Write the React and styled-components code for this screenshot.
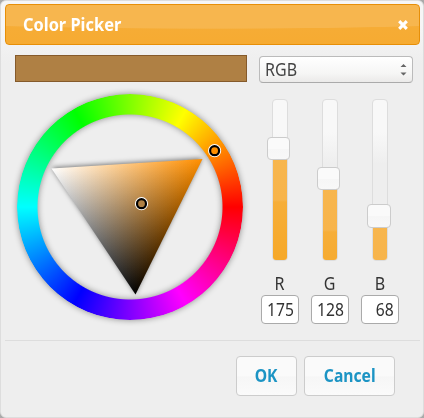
import React from "react";
import styled, { createGlobalStyle } from "styled-components";

const Page = createGlobalStyle`
  * { box-sizing: border-box; }
  body { margin: 0; background: #aaa; font-family: "Noto Sans", sans-serif; color: #333; }
`;

const Dialog = styled.main`
  width: 424px;
  height: 418px;
  padding: 3px 3px 0 4px;
  border: 1px solid #ddd;
  border-radius: 6px;
  background: linear-gradient(#f6f6f6 0, #f6f6f6 24px, #eee 62px);
`;

const TitleBar = styled.header`
  height: 41px;
  display: flex;
  align-items: center;
  justify-content: space-between;
  padding: 0 11px 0 17px;
  border: 1px solid #e78f08;
  border-radius: 4px;
  background: radial-gradient(ellipse 560px 36px at 50% -12px, #f7b64e 98%, transparent 100%),
    linear-gradient(#f7b64e, #f6ac35 60%, #f6ab32);
  color: #fff;
`;

const Title = styled.h1`
  margin: 0 0 2px;
  font: 700 18px/24px "Noto Sans", sans-serif;
  transform: scaleX(0.91);
  transform-origin: left;
`;

const Body = styled.section`
  height: 296px;
  display: grid;
  grid-template-columns: 232px 154px;
  column-gap: 12px;
  padding: 10px 0 0 10px;
  border-bottom: 1px solid #ddd;
`;

const Swatch = styled.div`
  height: 27px;
  border: 1px solid #855a2b;
  background: #af8044;
`;

const WheelArea = styled.div`
  position: relative;
  width: 226px;
  height: 226px;
  margin: 12px 0 0 2px;
`;

const RingShadow = styled.div`
  filter: drop-shadow(0 0 3px rgba(0, 0, 0, 0.42));
`;

const Ring = styled.div`
  width: 226px;
  height: 226px;
  border-radius: 50%;
  background: conic-gradient(from 90deg, #f00, #f0f, #00f, #0ff, #0f0, #ff0, #f00);
  mask: radial-gradient(circle, transparent 92px, #000 93px);
`;

const Shade = styled.svg`
  position: absolute;
  inset: 0;
  overflow: visible;

  .tri { filter: drop-shadow(0 -1px 2.5px rgba(0, 0, 0, 0.5)); }
  .mix { isolation: isolate; }
  .add { mix-blend-mode: plus-lighter; }
`;

const Controls = styled.div`
  padding-top: 1px;
`;

const Select = styled.div`
  height: 27px;
  display: flex;
  align-items: center;
  justify-content: space-between;
  padding: 0 5px 0 5px;
  border: 1px solid #bbb;
  border-bottom-color: #aaa;
  border-radius: 4px;
  background: linear-gradient(#fff, #f6f6f5 65%, #ebeae9);
  color: #444;
  font: 18px/25px "Noto Sans", sans-serif;
`;

const SelectText = styled.span`
  transform: scaleX(0.89);
  transform-origin: left;
`;

const Channels = styled.div`
  display: flex;
  gap: 12px;
  margin: 16px 0 0 2px;
`;

const Channel = styled.label`
  width: 38px;
  display: flex;
  flex-direction: column;
  align-items: center;
`;

const Track = styled.div`
  position: relative;
  width: 16px;
  height: 162px;
  border: 1px solid #ddd;
  border-radius: 4px;
  background: linear-gradient(#f8f8f8 20%, #eee 40%);
`;

const Fill = styled.div`
  position: absolute;
  inset: auto 0 0;
  height: ${(p) => p.$size}px;
  border-radius: 0 0 3px 3px;
  background: linear-gradient(#f7b64e, #f7b44b 51px, #f6ae39 53px, #f6a828 110px);
`;

const Thumb = styled.div`
  position: absolute;
  left: -6px;
  bottom: ${(p) => p.$size - 11}px;
  width: ${(p) => p.$width}px;
  height: ${(p) => p.$width}px;
  border: 1px solid #ccc;
  border-radius: 4px;
  background: linear-gradient(#fafafa 50%, #f6f6f6 52%, #f8f8f8);
`;

const ChannelName = styled.span`
  height: 20px;
  margin-top: 11px;
  font: 18px/22px "Noto Sans", sans-serif;
  transform: scaleX(0.89);
`;

const Field = styled.div`
  width: 38px;
  height: 29px;
  margin-top: 3px;
  padding-right: 4px;
  border: 1px solid #aaa;
  border-radius: 4px;
  background: #fff;
  text-align: right;
  font: 18px/27px "Noto Sans", sans-serif;
`;

const FieldText = styled.span`
  display: inline-block;
  transform: scaleX(0.87);
  transform-origin: right;
`;

const Footer = styled.footer`
  display: flex;
  justify-content: flex-end;
  gap: 7px;
  padding: 15px 25px 0 0;
`;

const Button = styled.button`
  width: ${(p) => p.$width}px;
  height: 40px;
  padding: 0 0 2px;
  border: 1px solid #ccc;
  border-radius: 4px;
  background: linear-gradient(#fafafa 50%, #f6f6f6 52%, #fafafa);
  color: #1c94c4;
  font: 700 18px/24px "Noto Sans", sans-serif;
`;

const ButtonText = styled.span`
  display: inline-block;
  margin: 0 -10px;
  transform: scaleX(0.87);
`;

const channels = [
  { name: "R", value: 175, size: 111, thumb: 23 },
  { name: "G", value: 128, size: 81, thumb: 23 },
  { name: "B", value: 68, size: 43, thumb: 24 },
];

const TRIANGLE = "34.5,74.5 185.5,65 118.5,200.5";

function Marker({ x, y, fill }) {
  return (
    <g>
      <circle cx={x} cy={y} r="5.6" fill={fill} stroke="#fff" strokeWidth="2" />
      <circle cx={x} cy={y} r="4.5" fill={fill} stroke="#000" strokeWidth="2.2" />
    </g>
  );
}

function Wheel() {
  return (
    <WheelArea>
      <RingShadow><Ring /></RingShadow>
      <Shade width="226" height="226">
        <defs>
          <linearGradient id="hue" gradientUnits="userSpaceOnUse" x1="76.6" y1="137.6" x2="185.5" y2="65">
            <stop stopColor="#000" />
            <stop offset="1" stopColor="#ff8f00" />
          </linearGradient>
          <linearGradient id="white" gradientUnits="userSpaceOnUse" x1="152.1" y1="132.6" x2="34.5" y2="74.5">
            <stop stopColor="#000" />
            <stop offset="1" stopColor="#fff" />
          </linearGradient>
          <clipPath id="triangle"><polygon points={TRIANGLE} /></clipPath>
        </defs>
        <g className="tri">
          <g className="mix" clipPath="url(#triangle)">
            <rect width="226" height="226" fill="url(#hue)" />
            <rect className="add" width="226" height="226" fill="url(#white)" />
          </g>
        </g>
        <Marker x={124.5} y={109.7} fill="#af8044" />
        <Marker x={197.6} y={56.7} fill="#ff8f00" />
      </Shade>
    </WheelArea>
  );
}

export default function App() {
  return (
    <>
      <Page />
      <Dialog>
        <TitleBar>
          <Title>Color Picker</Title>
          <svg width="10" height="10" viewBox="0 0 10 10">
            <path d="M1.2 1.2l7.6 7.6M8.8 1.2L1.2 8.8" stroke="#fff" strokeWidth="3.1" />
          </svg>
        </TitleBar>
        <Body>
          <div>
            <Swatch />
            <Wheel />
          </div>
          <Controls>
            <Select>
              <SelectText>RGB</SelectText>
              <svg width="7" height="13" viewBox="0 0 7 13" fill="#666">
                <path d="M3.5 1L6.5 4h-6zM0.5 9.5h6l-3 3z" />
              </svg>
            </Select>
            <Channels>
              {channels.map((c) => (
                <Channel key={c.name}>
                  <Track>
                    <Fill $size={c.size} />
                    <Thumb $size={c.size} $width={c.thumb} />
                  </Track>
                  <ChannelName>{c.name}</ChannelName>
                  <Field><FieldText>{c.value}</FieldText></Field>
                </Channel>
              ))}
            </Channels>
          </Controls>
        </Body>
        <Footer>
          <Button $width={61}><ButtonText>OK</ButtonText></Button>
          <Button $width={91}><ButtonText>Cancel</ButtonText></Button>
        </Footer>
      </Dialog>
    </>
  );
}
